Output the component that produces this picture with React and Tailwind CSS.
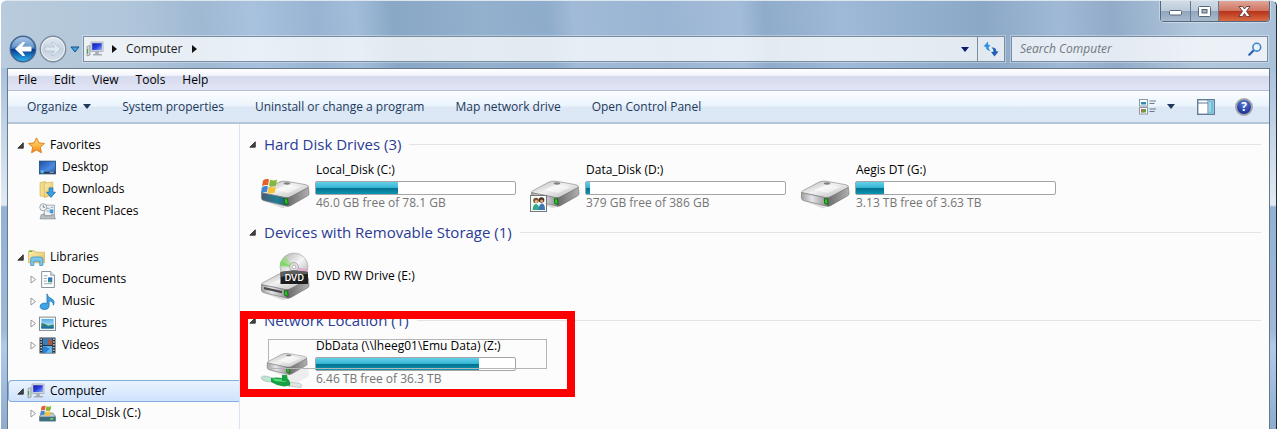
import React from "react";

const DRIVES = [
  { name: "Local_Disk (C:)", free: "46.0 GB free of 78.1 GB", used: 41, kind: "windows" },
  { name: "Data_Disk (D:)", free: "379 GB free of 386 GB", used: 2, kind: "shared" },
  { name: "Aegis DT (G:)", free: "3.13 TB free of 3.63 TB", used: 14, kind: "plain" },
];

function Defs() {
  return (
    <svg width="0" height="0" className="absolute" aria-hidden="true">
      <defs>
        <linearGradient id="topFace" x1="0" y1="0" x2="1" y2="1">
          <stop offset="0" stopColor="#b0b0b0" />
          <stop offset=".45" stopColor="#f1f1f1" />
          <stop offset="1" stopColor="#b5b5b5" />
        </linearGradient>
        <linearGradient id="frontFace" x1="0" y1="0" x2="1" y2="0">
          <stop offset="0" stopColor="#a0a0a0" />
          <stop offset=".4" stopColor="#e4e4ec" />
          <stop offset="1" stopColor="#8e8e8e" />
        </linearGradient>
        <linearGradient id="sideFace" x1="0" y1="0" x2="1" y2="0">
          <stop offset="0" stopColor="#666" />
          <stop offset="1" stopColor="#b0b0b0" />
        </linearGradient>
        <linearGradient id="tealFace" x1="0" y1="0" x2="1" y2="0">
          <stop offset="0" stopColor="#4b5a70" />
          <stop offset=".6" stopColor="#1f7f98" />
          <stop offset="1" stopColor="#2a5a60" />
        </linearGradient>
        <linearGradient id="backBlue" x1="0" y1="0" x2="0" y2="1">
          <stop offset="0" stopColor="#8fb6de" />
          <stop offset=".48" stopColor="#2f6db8" />
          <stop offset=".52" stopColor="#083a8e" />
          <stop offset="1" stopColor="#2cb6f2" />
        </linearGradient>
        <linearGradient id="forwardGrey" x1="0" y1="0" x2="0" y2="1">
          <stop offset="0" stopColor="#e3eaf2" />
          <stop offset=".5" stopColor="#c5d2e0" />
          <stop offset="1" stopColor="#d7e1ea" />
        </linearGradient>
        <linearGradient id="folder" x1="0" y1="0" x2="1" y2="1">
          <stop offset="0" stopColor="#fbf0b4" />
          <stop offset="1" stopColor="#e4bf58" />
        </linearGradient>
        <linearGradient id="screen" x1="0" y1="0" x2="1" y2="1">
          <stop offset="0" stopColor="#1420a8" />
          <stop offset=".5" stopColor="#2a3fe0" />
          <stop offset="1" stopColor="#8fb0f4" />
        </linearGradient>
        <linearGradient id="sky" x1="0" y1="0" x2="0" y2="1">
          <stop offset="0" stopColor="#54aee6" />
          <stop offset="1" stopColor="#d5f0fa" />
        </linearGradient>
        <linearGradient id="desk" x1="0" y1="0" x2="1" y2="1">
          <stop offset="0" stopColor="#1c4fa8" />
          <stop offset=".6" stopColor="#4b8be0" />
          <stop offset="1" stopColor="#2455a4" />
        </linearGradient>
        <linearGradient id="star" x1="0" y1="0" x2="0" y2="1">
          <stop offset="0" stopColor="#ffe978" />
          <stop offset="1" stopColor="#f58a18" />
        </linearGradient>
        <linearGradient id="disc" x1="0" y1="0" x2="1" y2="1">
          <stop offset="0" stopColor="#a9a9a9" />
          <stop offset=".5" stopColor="#f5f5f5" />
          <stop offset="1" stopColor="#a2a2a2" />
        </linearGradient>
        <radialGradient id="helpBlue" cx=".5" cy=".3" r=".7">
          <stop offset="0" stopColor="#5c7fe0" />
          <stop offset="1" stopColor="#12248c" />
        </radialGradient>
      </defs>
    </svg>
  );
}

function WindowsFlag() {
  return (
    <g>
      <path d="M2 2.4C4 .9 6.2.6 8 1.4L7 7.4C5.200 6.700 3 7 1 8.300Z" fill="#e2622b" />
      <path d="M9 1.700C11.200 2.700 13.600 2.700 16 1.400L15 7.600C12.700 8.800 10.300 8.700 8 7.700Z" fill="#86b93b" />
      <path d="M.800 9.400C2.800 8 5 7.800 6.800 8.500L5.800 14.300C4 13.600 1.800 13.900 0 15.200Z" fill="#3f86d0" />
      <path d="M7.800 8.800C10.100 9.800 12.500 9.800 14.800 8.700L13.800 14.600C11.500 15.700 9.100 15.600 6.800 14.700Z" fill="#f6c234" />
    </g>
  );
}

function DriveBody({ front = "url(#frontFace)" }) {
  return (
    <g transform="translate(0 4) scale(1 .88)">
      <path d="M3 37 23 46 49 31 49 27 26 40Z" fill="#000" opacity=".12" />
      <path d="M1.500 28Q1 27 2.500 26L18 16.500Q21 14.500 26 15L46 19Q49.500 20 48 22.500L31 32.500Q28.500 34.300 25.500 33.800Z" fill="url(#topFace)" stroke="#8d8d8d" strokeWidth=".7" />
      <path d="M1.500 28 26 33.800 27.500 43.500 3.500 37Q1.500 36.200 1.400 34Z" fill={front} stroke="#777" strokeWidth=".7" />
      <path d="M26 33.800Q29 34 31 32.500L48.500 22 49 29.500Q48.800 31 47 32L31 42.500Q28.500 43.900 27.300 43.400Z" fill="url(#sideFace)" stroke="#707070" strokeWidth=".6" />
      <path d="M14 25 27 18.500 41 21.500 28 28.500Z" fill="#fff" opacity=".5" />
      <ellipse cx="27" cy="17.600" rx="3.200" ry="1.300" fill="#808080" />
      <path d="M24.300 34.800 27.500 35.200 28.200 41.300 24.800 40.600Z" fill="#29c425" stroke="#155e12" strokeWidth=".9" />
    </g>
  );
}

function DriveIcon({ kind }) {
  return (
    <svg viewBox="0 0 50 48" className="h-12 w-[50px] shrink-0" aria-hidden="true">
      {kind === "dvd" && (
        <>
          <g transform="translate(0 4)"><DriveBody /><path d="M4 31 22 35 22 37.200 4 33.200Z" fill="#4a4a4a" /></g>
          <circle cx="34" cy="15" r="14" fill="url(#disc)" stroke="#a0a0a0" strokeWidth=".6" />
          <path d="M34 15 21 9A14 14 0 0 1 25 4.500Z" fill="#7fe05a" opacity=".55" />
          <path d="M34 15 20 14A14 14 0 0 1 21 9Z" fill="#6cdc4c" opacity=".8" />
          <path d="M34 15 48 17A14 14 0 0 1 46 22Z" fill="#e89ad0" opacity=".7" />
          <circle cx="34" cy="15" r="4.500" fill="#ddd" stroke="#999" strokeWidth=".7" />
          <circle cx="34" cy="15" r="1.800" fill="#fff" stroke="#888" strokeWidth=".5" />
          <path d="M20.500 20Q34 17 48 20V32H20.500Z" fill="#1d1d1d" />
          <path d="M20.500 20Q34 17 48 20V22Q34 22 20.500 25Z" fill="#777" opacity=".7" />
          <text x="34.300" y="29" textAnchor="middle" fontFamily="Inter, sans-serif" fontWeight="600" fontSize="9" fill="#fff">DVD</text>
        </>
      )}
      {kind === "windows" && (
        <>
          <DriveBody front="url(#tealFace)" />
          <g transform="translate(1 14)"><WindowsFlag /></g>
        </>
      )}
      {kind === "plain" && <DriveBody />}
      {kind === "shared" && (
        <>
          <DriveBody />
          <rect x=".500" y="31.500" width="16" height="16" fill="#f4fbfb" stroke="#777" />
          <circle cx="6" cy="36.500" r="2.800" fill="#7b5130" />
          <circle cx="11.500" cy="36" r="2.800" fill="#4b2f1c" />
          <circle cx="6.300" cy="37.500" r="1.600" fill="#e7b98c" />
          <circle cx="11.700" cy="37" r="1.600" fill="#d9a578" />
          <path d="M2.500 46Q3 40 6 40T9.500 46Z" fill="#35a98c" />
          <path d="M8.500 46Q9 39.500 12 39.500T15 46Z" fill="#3f76b4" />
        </>
      )}
      {kind === "network" && (
        <>
          <path d="M12 40 48 27 49 36 32 46Z" fill="#000" opacity=".06" />
          <g transform="translate(6 -1) scale(.84)"><DriveBody /></g>
          <path d="M1 37.500Q2 35.500 6 36L13 38 14 42 6 41.500Q1 40 1 37.500Z" fill="#bfe3d2" stroke="#a4b9ae" strokeWidth=".6" />
          <path d="M28 42 40 43.500Q43 45 41 47.500L28 46Z" fill="#dfe6e2" stroke="#abb5b0" strokeWidth=".6" />
          <path d="M11 38 17 37.500 28 39Q31 42 30 45.500L24 46.500 17 45 11 42Z" fill="#16a043" />
          <path d="M12 38.500 28 40 25 42 15 41Z" fill="#55dd7c" />
          <path d="M22 35 27 35 28 41 22 41Z" fill="#18a040" />
        </>
      )}
    </svg>
  );
}

function ComputerIcon() {
  return (
    <svg viewBox="0 0 18 16" className="h-4 w-[18px] shrink-0" aria-hidden="true">
      <path d="M1 5.500 4 4.500V14L1 15Z" fill="#d5d9dc" stroke="#858b90" strokeWidth=".7" />
      <path d="M1.600 8V12.500" stroke="#2fae35" strokeWidth="1" />
      <rect x="5" y="1" width="12" height="9.500" fill="#dfe3e8" stroke="#9aa1aa" strokeWidth=".7" />
      <rect x="6.200" y="2.200" width="9.600" height="7" fill="url(#screen)" />
      <path d="M9.500 10.500H12.500L13 13H16V14.500H7V13H9Z" fill="#a9adb3" />
    </svg>
  );
}

const glyphs = {
  star: <path d="M8 .8 10.200 5.500 15.400 6.100 11.600 9.600 12.600 14.800 8 12.200 3.400 14.800 4.400 9.600 .6 6.100 5.800 5.500Z" fill="url(#star)" stroke="#e07b1a" strokeWidth=".9" />,
  desktop: (
    <>
      <rect x=".500" y="2" width="15" height="12" fill="url(#desk)" stroke="#274673" strokeWidth=".8" />
      <path d="M1 12H15V13.600H1Z" fill="#27384e" />
      <circle cx="3" cy="12" r="1.700" fill="#54b7e8" />
      <path d="M10 12.500H14" stroke="#b8c9dc" strokeWidth=".8" />
    </>
  ),
  downloads: (
    <>
      <path d="M1 1.500 6 .5 7 2V15L1 14Z" fill="#f4dc8a" stroke="#cfae52" strokeWidth=".6" />
      <path d="M5 2 13 1V13L5 15.500Z" fill="url(#folder)" stroke="#cfae52" strokeWidth=".6" />
      <path d="M9.500 6.500H13V10.500H15.500L11.300 15.500 7 10.500H9.500Z" fill="#3aa0e4" stroke="#1d68ae" strokeWidth=".7" />
    </>
  ),
  recent: (
    <>
      <path d="M5 2H14.500V12H5Z" fill="#eef3f7" stroke="#8a9298" strokeWidth=".7" />
      <path d="M7 5H10M11 4H13.500M7 7.500H9.500" stroke="#7f97a8" strokeWidth=".8" />
      <rect x="10" y="6" width="3.500" height="3.500" fill="#3f9bd8" />
      <path d="M2 11 5 10V12H12V10L14 11 15.500 15H1Z" fill="#b9bec2" stroke="#858b90" strokeWidth=".6" />
      <circle cx="4" cy="4" r="3.300" fill="#f2f4f5" stroke="#959da3" strokeWidth=".8" />
      <path d="M4 2V4H5.800" stroke="#59636a" strokeWidth=".7" fill="none" />
    </>
  ),
  libraries: (
    <>
      <path d="M.5 2 6 1.500 7 3H15.500V13H.5Z" fill="url(#folder)" stroke="#cda94c" strokeWidth=".6" />
      <path d="M1 1.500H4V2.800H1Z" fill="#6cba3a" />
      <path d="M2.500 15.500V9.500Q2.500 7.500 5 7.500H11.500Q14 7.500 14 9.500V15.500H11V11.500H5.500V15.500Z" fill="#79c6ee" stroke="#3b8fc4" strokeWidth=".7" />
    </>
  ),
  documents: (
    <>
      <path d="M2.500 .5H11L14.500 4V15.500H2.500Z" fill="#fff" stroke="#7e8a94" strokeWidth=".9" />
      <path d="M11 .5V4H14.500" fill="#dbe3ea" stroke="#7e8a94" strokeWidth=".7" />
      <path d="M4.500 4.500H8M4.500 7H7.500M4.500 9.500H7.500M4.500 12H12.500" stroke="#7f97ac" strokeWidth=".8" />
      <rect x="8.500" y="6" width="4" height="4.500" fill="#2e79bd" />
      <path d="M8.500 10.500 10.500 8.500 12.500 10.500Z" fill="#3d9b52" />
    </>
  ),
  music: (
    <path d="M7.500 .8Q8 4 12 5.500 15.500 7.500 13.500 11.500 13.500 8 9.500 7.300V12Q9.500 15.500 5 15.500 1 15.300 1 12.700 1.200 10 4.500 9.500 6.500 9.300 7.500 10Z" fill="#3fa4e4" stroke="#1d70b8" strokeWidth=".7" />
  ),
  pictures: (
    <>
      <rect x=".500" y="2" width="15" height="12.500" fill="#fff" stroke="#7b858d" strokeWidth=".9" />
      <rect x="2.200" y="3.700" width="11.600" height="9" fill="url(#sky)" />
      <path d="M2.200 7.500Q6 8 8.500 10L13.800 9V12.700H2.200Z" fill="#2f7f6c" />
      <path d="M2.200 10.800 13.800 11.200V12.700H2.200Z" fill="#1c6fb4" />
    </>
  ),
  videos: (
    <>
      <rect x=".500" y=".500" width="15" height="15" fill="#2b3338" />
      <rect x="3.500" y="1" width="9" height="6.500" fill="#3d7eb8" />
      <rect x="3.500" y="8.500" width="9" height="6.500" fill="#64b7ee" />
      <path d="M8 1 12.500 4V7.500H9Z" fill="#b0563e" />
      <path d="M5 8.500 10 11 6 15H3.500V10Z" fill="#2a7fd6" />
      <path d="M2 1.500V15M14 1.500V15" stroke="#d7dde0" strokeWidth="1.300" strokeDasharray="1.300 1.300" />
    </>
  ),
  disk: (
    <>
      <path d="M.5 10.500 3 7.500H13L15.500 10.500V15H.5Z" fill="#c3c8cb" stroke="#6f767b" strokeWidth=".6" />
      <path d="M.5 11H15.500V15.300H.5Z" fill="#3d6f80" />
      <rect x="10.500" y="12.300" width="3" height="1.500" fill="#63e05a" />
      <g transform="translate(1 0) scale(.66)"><WindowsFlag /></g>
    </>
  ),
};

function SmallIcon({ name }) {
  if (name === "computer") return <ComputerIcon />;
  return <svg viewBox="0 0 16 16" className="size-[17px] shrink-0" aria-hidden="true">{glyphs[name]}</svg>;
}

function OpenMark() {
  return <svg viewBox="0 0 7 7" className="size-[7px] shrink-0" aria-hidden="true"><path d="M6.300 .8V6.200H.8Z" fill="#444" stroke="#222" strokeWidth=".8" strokeLinejoin="round" /></svg>;
}

function ClosedMark() {
  return <svg viewBox="0 0 7 9" className="h-[9px] w-[7px] shrink-0" aria-hidden="true"><path d="M1 1 5.500 4.500 1 8Z" fill="#fff" stroke="#999" /></svg>;
}

function DownMark() {
  return <svg viewBox="0 0 8 5" className="h-[5px] w-2 shrink-0" aria-hidden="true"><path d="M0 0H8L4 5Z" fill="currentColor" /></svg>;
}

function RightMark() {
  return <svg viewBox="0 0 5 8" className="h-2 w-[5px] shrink-0" aria-hidden="true"><path d="M0 0 5 4 0 8Z" fill="#111" /></svg>;
}

function TreeRoot({ icon, label, selected }) {
  return (
    <a href="#" className={"flex h-[22px] items-center gap-[3px] pl-2 " + (selected ? "rounded-l-sm border border-r-0 border-[#84acdd] bg-linear-to-b from-[#eaf3fe] to-[#cfe3fd]" : "border border-transparent")}>
      <OpenMark />
      <span className="flex w-[18px] justify-center"><SmallIcon name={icon} /></span>
      <span className="pl-0.5">{label}</span>
    </a>
  );
}

function TreeLeaf({ icon, label, closed }) {
  return (
    <a href="#" className="flex h-[22px] items-center pl-[22px]">
      <span className="flex w-[9px] shrink-0">{closed && <ClosedMark />}</span>
      <SmallIcon name={icon} />
      <span className="pl-1.5">{label}</span>
    </a>
  );
}

function Sidebar() {
  return (
    <nav aria-label="Folders" className="flex w-[232px] shrink-0 flex-col gap-6 border-r border-[#d6e5f5] pt-2.5">
      <div>
        <TreeRoot icon="star" label="Favorites" />
        <TreeLeaf icon="desktop" label="Desktop" />
        <TreeLeaf icon="downloads" label="Downloads" />
        <TreeLeaf icon="recent" label="Recent Places" />
      </div>
      <div>
        <TreeRoot icon="libraries" label="Libraries" />
        <TreeLeaf icon="documents" label="Documents" closed />
        <TreeLeaf icon="music" label="Music" closed />
        <TreeLeaf icon="pictures" label="Pictures" closed />
        <TreeLeaf icon="videos" label="Videos" closed />
      </div>
      <div>
        <TreeRoot icon="computer" label="Computer" selected />
        <TreeLeaf icon="disk" label="Local_Disk (C:)" closed />
      </div>
    </nav>
  );
}

function Group({ title, children }) {
  return (
    <section className="relative h-[88px]">
      <h2 className="flex h-6 items-center gap-2 pl-[9px] pr-2">
        <button className="flex items-center gap-2 whitespace-nowrap text-[15px] text-[#2a3b96]"><OpenMark />{title}</button>
        <span className="h-px flex-1 bg-[#e4e4e4]" />
      </h2>
      <div className="grid grid-cols-[repeat(auto-fill,270px)] pl-5">{children}</div>
    </section>
  );
}

function Drive({ name, free, used, kind }) {
  return (
    <div className="flex h-16 items-center gap-[5px]">
      <DriveIcon kind={kind} />
      {free ? (
        <div className="flex w-[201px] flex-col self-start pt-1">
          <span className="mb-px h-5 whitespace-nowrap pl-px leading-5">{name}</span>
          <div role="progressbar" aria-label={name} aria-valuenow={used} className="h-3.5 rounded-xs border border-[#a5a5a5] bg-white">
            <div className="h-full bg-[linear-gradient(to_bottom,#64d0ea,#35b4d4_48%,#04708c_52%,#0c96b4)]" style={{ width: used + "%" }} />
          </div>
          <span className="h-4 whitespace-nowrap pl-px leading-4 text-[#757575]">{free}</span>
        </div>
      ) : (
        <span className="pl-px">{name}</span>
      )}
    </div>
  );
}

function Header() {
  return (
    <header className="-mx-1.5 bg-[linear-gradient(85deg,#b9cbdc,#b1c6da_10%,#9fb9d3_16%,#a8c2de_20%,#98b4d2_25%,#a2bdda_28%,#89a8c6_31%,#93b0cd_38%,#8eaccb_43%,#a0bad7_45%,#9ab5d3_52%,#a3bcda_58%,#8facca_60%,#9fb9d8_66%,#94b0cf_72%,#8ba8c6_77%,#9fb9d6_83%,#91abc8_87%,#b2c8dc_94%,#a9c1d8)] px-1.5">
      <div className="flex h-[21px] justify-end">
        <div className="flex rounded-b border border-t-0 border-[#56687e] text-white shadow-[0_0_0_1px_#ffffff60]">
          <button aria-label="Minimize" className="flex w-[30px] items-center justify-center border-r border-[#68798e] bg-[linear-gradient(#d0dbe6,#bccad9_48%,#91a5bd_52%,#a8bbce)]">
            <svg viewBox="0 0 13 6" className="mt-1 h-1.5 w-[13px]" aria-hidden="true"><rect x=".500" y=".500" width="12" height="4.500" rx="1" fill="#fff" stroke="#586678" /></svg>
          </button>
          <button aria-label="Restore" className="flex w-7 items-center justify-center border-r border-[#68798e] bg-[linear-gradient(#d0dbe6,#bccad9_48%,#91a5bd_52%,#a8bbce)]">
            <svg viewBox="0 0 13 11" className="h-[11px] w-[13px]" aria-hidden="true"><rect x=".500" y=".500" width="12" height="10" rx="1" fill="#fff" stroke="#586678" /><rect x="4" y="3.500" width="5" height="3.500" fill="#9fb1c5" stroke="#586678" /></svg>
          </button>
          <button aria-label="Close" className="flex w-[50px] items-center justify-center rounded-br bg-[linear-gradient(#e0a598,#cf7562_48%,#b8331b_52%,#d96a42)]">
            <svg viewBox="0 0 13 11" className="h-[11px] w-[13px]" aria-hidden="true"><path d="M1 .5H4.500L6.500 3 8.500 .5H12L8.500 5.300 12.200 10.500H8.500L6.500 7.600 4.500 10.500H.8L4.500 5.300Z" fill="#fff" stroke="#5e3a42" strokeWidth=".9" /></svg>
          </button>
        </div>
      </div>
      <div className="flex items-center px-0.5 pb-1.5 pt-3.5">
        <div className="-my-1 flex shrink-0 items-center">
          <button aria-label="Back" className="rounded-full">
            <svg viewBox="0 0 28 28" className="size-7" aria-hidden="true"><circle cx="14" cy="14" r="12.700" fill="url(#backBlue)" stroke="#44658e" strokeWidth="1.400" /><path d="M3 13A11 11 0 0 1 25 13Q14 9 3 13Z" fill="#fff" opacity=".25" /><path d="M6.500 14 13.500 7.500H15.500L12.500 12H22V16H12.500L15.500 20.500H13.500Z" fill="#fff" stroke="#fff" strokeWidth="1" strokeLinejoin="round" /></svg>
          </button>
          <button aria-label="Forward" className="ml-0.5 rounded-full">
            <svg viewBox="0 0 28 28" className="size-7" aria-hidden="true"><circle cx="14" cy="14" r="12.700" fill="url(#forwardGrey)" stroke="#7d8c9d" strokeWidth="1.400" /><circle cx="14" cy="14" r="11.500" fill="none" stroke="#f3f7fa" strokeWidth=".8" /><path d="M21.500 14 14.500 7.500H12.500L15.500 12H6V16H15.500L12.500 20.500H14.500Z" fill="#e1e9f0" stroke="#b5c2d0" strokeWidth=".8" strokeLinejoin="round" /></svg>
          </button>
          <button aria-label="Recent pages" className="px-[3px]">
            <svg viewBox="0 0 10 7" className="h-[7px] w-2.5" aria-hidden="true"><path d="M1 1H9L5 6Z" fill="#35a6e0" stroke="#1d4d86" /></svg>
          </button>
        </div>
        <div className="flex h-[26px] flex-1 items-center border border-[#7a8da2] bg-white/75 pl-0.5 shadow-[0_0_0_1px_#ffffff50]">
          <ComputerIcon />
          <span className="pl-2"><RightMark /></span>
          <button className="px-[9px] text-[#222]">Computer</button>
          <RightMark />
          <button aria-label="Previous locations" className="ml-auto flex h-full w-6 items-center justify-center text-[#0a1c6a]"><DownMark /></button>
          <button aria-label="Refresh" className="flex h-full w-[27px] items-center justify-center border-l border-[#7a8da2]">
            <svg viewBox="0 0 16 16" className="size-4" aria-hidden="true"><path d="M.5 5.500 5 .5V3.500L7.500 4.500 5.500 6.200Q5.500 8.500 7.500 9.800 3 9.800 2.800 5.800Z" fill="#2c93e0" /><path d="M15.500 10.500 11.500 15.500 8 11 10.500 10.800Q10.800 8 8.500 6.500 13.300 6 13.300 10.300Z" fill="#2160b4" /></svg>
          </button>
        </div>
        <label className="ml-1.5 flex h-[26px] w-[257px] shrink-0 items-center border border-[#7a8da2] bg-white/75 pl-2 pr-[5px] shadow-[0_0_0_1px_#ffffff50]">
          <input type="text" aria-label="Search Computer" placeholder="Search Computer" className="min-w-0 flex-1 bg-transparent italic outline-none placeholder:text-[#707880]" />
          <svg viewBox="0 0 14 14" className="size-3.5" aria-hidden="true"><path d="M1.300 12.700 5.500 8.500" stroke="#2a62b0" strokeWidth="2.200" strokeLinecap="round" /><circle cx="8.800" cy="5.200" r="3.900" fill="#e9f4fb" stroke="#3f83cc" strokeWidth="1.600" /></svg>
        </label>
      </div>
    </header>
  );
}

function Toolbar() {
  return (
    <div className="flex h-[33px] items-center gap-[31px] border-b-2 border-[#b4c6dc] bg-[linear-gradient(#fbfdff,#eaf4fc_48%,#dce7f5_52%,#dde8f6)] pl-[19px] pr-4 text-[#1e395b]">
      <button className="flex items-center gap-1.5">Organize <DownMark /></button>
      <button>System properties</button>
      <button>Uninstall or change a program</button>
      <button>Map network drive</button>
      <button>Open Control Panel</button>
      <div className="ml-auto flex items-center">
        <button aria-label="Change view" className="flex items-center gap-2.5">
          <svg viewBox="0 0 18 16" className="h-4 w-[18px]" aria-hidden="true">
            <rect x=".500" y=".500" width="8" height="6.500" fill="#fff" stroke="#8b98a6" /><rect x="2" y="3" width="5" height="2.500" fill="#2d8fb0" />
            <rect x=".500" y="8.500" width="8" height="6.500" fill="#fff" stroke="#8b98a6" /><path d="M2 10H4.500V13.500H2Z" fill="#d55" /><path d="M4.500 10H7V13.500H3Z" fill="#59a63a" />
            <path d="M10.500 2H17M10.500 4.500H15.500M10.500 10H17M10.500 12.500H15.500" stroke="#66788c" />
          </svg>
          <DownMark />
        </button>
        <button aria-label="Show the preview pane" className="ml-[22px]">
          <svg viewBox="0 0 18 16" className="h-4 w-[18px]" aria-hidden="true"><rect x=".700" y=".700" width="16.600" height="14.600" fill="#fff" stroke="#5f7c99" strokeWidth="1.400" /><path d="M1 4H11M11 1V15" stroke="#5f7c99" /><rect x="11.500" y="1.500" width="5" height="13" fill="#6fc0dc" /><path d="M13 3V13" stroke="#c5ecf6" /></svg>
        </button>
        <button aria-label="Get help" className="ml-5">
          <svg viewBox="0 0 18 18" className="size-[18px]" aria-hidden="true"><circle cx="9" cy="9" r="7.900" fill="url(#helpBlue)" stroke="#a2a4a8" strokeWidth="2" /><text x="9" y="13.300" textAnchor="middle" fontFamily="Open Sans, sans-serif" fontSize="12" fontWeight="700" fill="#fff">?</text></svg>
        </button>
      </div>
    </div>
  );
}

export default function App() {
  return (
    <div className="min-h-screen bg-white pl-px font-['Open_Sans','Noto_Sans',sans-serif] text-[12px] leading-4 text-black">
      <Defs />
      <div className="flex min-h-screen flex-col overflow-hidden rounded-t-md border-r border-t border-r-[#222c36] border-t-[#dbe6ef] bg-[linear-gradient(#a9c2dc,#a9c2dc_68px,#e2eaf2_204px,#94b1d2_206px,#9fb9d8_330px,#b0cbea_345px,#8fabcc)] px-1.5">
        <Header />
        <main className="flex flex-1 flex-col border-x border-t border-[#66788c] bg-[#fcfcfc]">
          <div role="menubar" aria-label="Menu" className="flex h-[22px] items-center gap-[17px] border-b border-[#b5bdd2] bg-[linear-gradient(#fff,#f3f5fb_30%,#d5daed_36%,#e2e5f5)] pl-2.5">
            {["File", "Edit", "View", "Tools", "Help"].map((m) => (
              <button role="menuitem" key={m}>{m}</button>
            ))}
          </div>
          <Toolbar />
          <div className="flex flex-1">
            <Sidebar />
            <div className="min-w-0 flex-1 pt-2">
              <Group title="Hard Disk Drives (3)">
                {DRIVES.map((d) => <Drive key={d.name} {...d} />)}
              </Group>
              <Group title="Devices with Removable Storage (1)">
                <Drive name="DVD RW Drive (E:)" kind="dvd" />
              </Group>
              <Group title="Network Location (1)">
                <Drive name="DbData (\\lheeg01\Emu Data) (Z:)" free="6.46 TB free of 36.3 TB" used={82} kind="network" />
                <div className="pointer-events-none absolute left-7 top-[31px] h-[30px] w-[279px] border border-[#b5b5b5]" />
                <div className="pointer-events-none absolute left-0 top-[3px] h-[86px] w-[335px] border-8 border-[#fe0000]" />
              </Group>
            </div>
          </div>
        </main>
      </div>
    </div>
  );
}
